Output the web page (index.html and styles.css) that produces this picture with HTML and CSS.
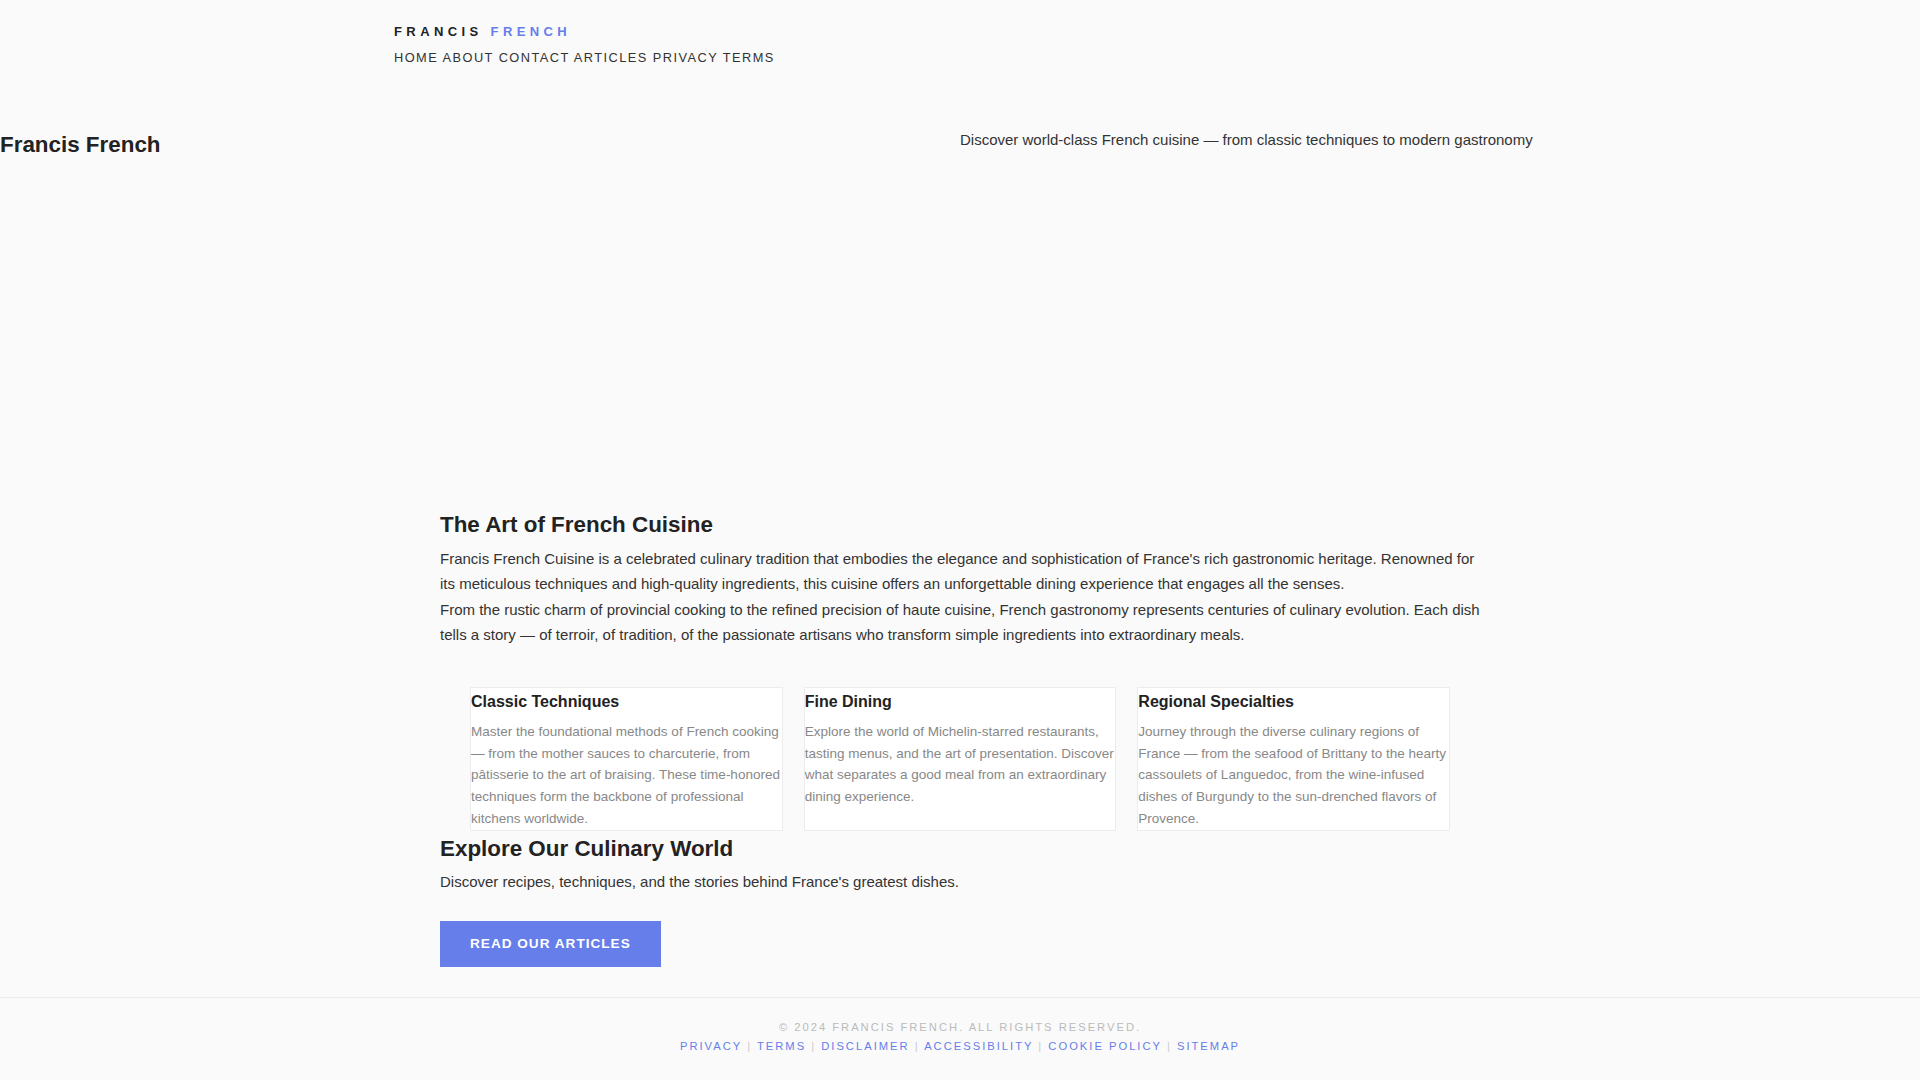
FILE: index.html
```html
<!DOCTYPE html>
<html lang="en">
<head>
<meta charset="utf-8">
<title>Francis French</title>
<link rel="stylesheet" href="styles.css">
</head>
<body>
<header class="site-header">
  <div class="header-inner">
    <div class="logo">FRANCIS <span class="logo-accent">FRENCH</span></div>
    <nav class="main-nav">
      <a href="#">HOME</a>
      <a href="#">ABOUT</a>
      <a href="#">CONTACT</a>
      <a href="#">ARTICLES</a>
      <a href="#">PRIVACY</a>
      <a href="#">TERMS</a>
    </nav>
  </div>
</header>

<section class="hero">
  <h1 class="hero-title">Francis French</h1>
  <p class="hero-tagline">Discover world-class French cuisine — from classic techniques to modern gastronomy</p>
</section>

<main class="content">
  <h2 class="section-title">The Art of French Cuisine</h2>
  <p class="body-text">Francis French Cuisine is a celebrated culinary tradition that embodies the elegance and sophistication of France's rich gastronomic heritage. Renowned for its meticulous techniques and high-quality ingredients, this cuisine offers an unforgettable dining experience that engages all the senses.</p>
  <p class="body-text">From the rustic charm of provincial cooking to the refined precision of haute cuisine, French gastronomy represents centuries of culinary evolution. Each dish tells a story — of terroir, of tradition, of the passionate artisans who transform simple ingredients into extraordinary meals.</p>

  <div class="features">
    <div class="card">
      <h3 class="card-title">Classic Techniques</h3>
      <p class="card-text">Master the foundational methods of French cooking — from the mother sauces to charcuterie, from pâtisserie to the art of braising. These time-honored techniques form the backbone of professional kitchens worldwide.</p>
    </div>
    <div class="card">
      <h3 class="card-title">Fine Dining</h3>
      <p class="card-text">Explore the world of Michelin-starred restaurants, tasting menus, and the art of presentation. Discover what separates a good meal from an extraordinary dining experience.</p>
    </div>
    <div class="card">
      <h3 class="card-title">Regional Specialties</h3>
      <p class="card-text">Journey through the diverse culinary regions of France — from the seafood of Brittany to the hearty cassoulets of Languedoc, from the wine-infused dishes of Burgundy to the sun-drenched flavors of Provence.</p>
    </div>
  </div>

  <h2 class="section-title">Explore Our Culinary World</h2>
  <p class="body-text">Discover recipes, techniques, and the stories behind France's greatest dishes.</p>
  <a class="cta-btn" href="#">READ OUR ARTICLES</a>
</main>

<footer class="site-footer">
  <p class="copyright">© 2024 FRANCIS FRENCH. ALL RIGHTS RESERVED.</p>
  <p class="footer-links"><a href="#">PRIVACY</a> <span class="sep">|</span> <a href="#">TERMS</a> <span class="sep">|</span> <a href="#">DISCLAIMER</a> <span class="sep">|</span> <a href="#">ACCESSIBILITY</a> <span class="sep">|</span> <a href="#">COOKIE POLICY</a> <span class="sep">|</span> <a href="#">SITEMAP</a></p>
</footer>
</body>
</html>
```

FILE: styles.css
```css
html, body {
  margin: 0;
  padding: 0;
}

body {
  background: #fafafa;
  color: #333;
  font-family: "Liberation Sans", Arial, Helvetica, sans-serif;
  font-size: 15px;
  line-height: 1.7;
}

a {
  text-decoration: none;
  color: inherit;
}

/* Header */
.site-header {
  padding-top: 22px;
}

.header-inner {
  max-width: 1132px;
  margin: 0 auto;
}

.logo {
  font-size: 13px;
  font-weight: bold;
  letter-spacing: 4.4px;
  color: #222;
  line-height: 1.6;
}

.logo-accent {
  color: #667eea;
}

.main-nav {
  margin-top: 5px;
  font-size: 12.8px;
  letter-spacing: 1.45px;
  line-height: 1.6;
  color: #333;
}

/* Hero */
.hero {
  display: grid;
  grid-template-columns: 1fr 1fr;
  align-items: start;
  box-sizing: border-box;
  height: 439px;
  padding-top: 59px;
}

.hero-title {
  margin: 0;
  font-size: 22.4px;
  line-height: 1.6;
  font-weight: bold;
  color: #222;
}

.hero-tagline {
  margin: 0;
  font-size: 15px;
  line-height: 1.7;
  color: #333;
}

/* Main content */
.content {
  max-width: 1040px;
  margin: 0 auto;
  padding-bottom: 30.5px;
}

.section-title {
  margin: 0 0 2.5px;
  font-size: 22.4px;
  line-height: 1.6;
  font-weight: bold;
  color: #222;
}

.body-text {
  margin: 0 -8px 0 0;
  font-size: 15px;
  line-height: 1.7;
  color: #333;
}

.features {
  display: grid;
  grid-template-columns: repeat(3, 1fr);
  gap: 21px;
  margin: 39.7px 0 0;
  padding: 0 30px;
}

.card {
  background: #fff;
  border: 1px solid #ececec;
  padding: 1px 0 0;
}

.card-title {
  margin: 0 0 6px;
  font-size: 16px;
  line-height: 1.6;
  font-weight: bold;
  color: #222;
}

.card-text {
  margin: 0;
  font-size: 13.5px;
  line-height: 21.76px;
  color: #888;
}

.cta-btn {
  display: block;
  width: max-content;
  margin-top: 26px;
  padding: 15px 30px;
  background: #667eea;
  color: #fff;
  font-size: 13.6px;
  font-weight: bold;
  letter-spacing: 1px;
  line-height: 1.2;
}

/* Footer */
.site-footer {
  border-top: 1px solid #ececec;
  padding: 21px 0 20px;
  text-align: center;
}

.copyright {
  margin: 0 0 1px;
  font-size: 11.2px;
  letter-spacing: 2px;
  line-height: 1.6;
  color: #bbb;
}

.footer-links {
  margin: 0;
  font-size: 11.2px;
  letter-spacing: 2px;
  line-height: 1.6;
  color: #667eea;
}

.footer-links .sep {
  color: #ccc;
}
```
